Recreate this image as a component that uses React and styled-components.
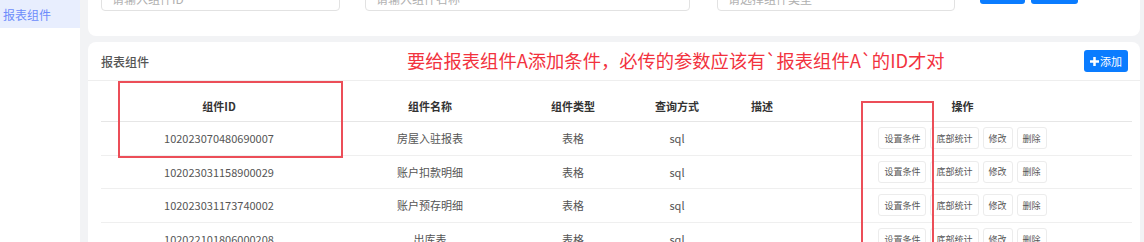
import React from 'react';
import styled, { createGlobalStyle } from 'styled-components';

const GlobalStyle = createGlobalStyle`
  html, body {
    margin: 0;
    padding: 0;
    background: #f2f3f5;
    font-family: "Noto Sans CJK SC", "Liberation Sans", sans-serif;
    overflow: hidden;
  }
  * { box-sizing: border-box; }
`;

const rows = [
  { id: '102023070480690007', name: '房屋入驻报表', type: '表格', query: 'sql' },
  { id: '102023031158900029', name: '账户扣款明细', type: '表格', query: 'sql' },
  { id: '102023031173740002', name: '账户预存明细', type: '表格', query: 'sql' },
  { id: '102022101806000208', name: '出库表', type: '表格', query: 'sql' },
];

const Layout = styled.div`
  display: flex;
  width: 1144px;
  height: 242px;
  overflow: hidden;
`;

const Sidebar = styled.aside`
  width: 80px;
  flex: none;
  background: #fff;
`;

const MenuItem = styled.div`
  height: 28px;
  padding-left: 3px;
  display: flex;
  align-items: center;
  font-size: 12px;
  color: ${p => (p.active ? '#6d8cfb' : '#555')};
  background: ${p => (p.active ? '#e8eefe' : 'transparent')};
`;

const Main = styled.main`
  flex: 1;
  padding: 0 4px 0 8px;
  margin-top: -31px;
  display: flex;
  flex-direction: column;
  gap: 6px;
`;

const Card = styled.section`
  position: relative;
  background: #fff;
  border-radius: 8px;
`;

const SearchRow = styled.div`
  display: flex;
  align-items: flex-start;
  padding: 16px 13px 25px;
`;

const Field = styled.div`
  position: relative;
  width: ${p => p.w}px;
  margin-right: ${p => p.mr}px;
  height: 26px;
  border: 1px solid #e2e2e2;
  border-radius: 4px;
  font-size: 12px;
  color: #b0b0b0;
  display: flex;
  align-items: center;
  padding: 0 10px;
`;

const Caret = styled.svg`
  position: absolute;
  right: 10px;
  top: 9px;
`;

const BlueButton = styled.button`
  height: 26px;
  width: ${p => p.w}px;
  margin-top: -7px;
  margin-left: ${p => p.ml}px;
  border: none;
  border-radius: 3px;
  background: #0a7cff;
  color: #fff;
  font-family: inherit;
  font-size: 12px;
  padding: 0;
`;

const CardHeader = styled.div`
  height: 39px;
  display: flex;
  align-items: center;
  padding: 0 12px 0 13px;
  border-bottom: 1px solid #eeeeee;
`;

const Title = styled.div`
  font-size: 12px;
  color: #555;
  font-weight: 500;
  width: 306px;
`;

const Note = styled.div`
  flex: 1;
  font-size: 18.3px;
  margin-top: -2px;
  color: #f2323e;
  white-space: nowrap;
`;

const AddButton = styled.button`
  width: 44px;
  height: 22px;
  border: none;
  border-radius: 3px;
  background: #0a7cff;
  color: #fff;
  font-family: inherit;
  font-size: 11px;
  padding: 0;
  display: flex;
  align-items: center;
  justify-content: center;
  gap: 1px;
`;

const TableWrap = styled.div`
  padding: 10px 8px 0 13px;
`;

const Row = styled.div`
  display: grid;
  grid-template-columns: 236px 186px 100px 108px 62px 1fr;
  align-items: center;
  height: ${p => (p.head ? 31 : 33.6)}px;
  border-bottom: 1px solid ${p => (p.head ? '#e6e6e6' : '#efefef')};
`;

const Cell = styled.div`
  text-align: center;
  font-size: 11px;
  color: ${p => (p.head ? '#333' : '#555')};
  font-weight: ${p => (p.head ? 700 : 400)};
`;

const Ops = styled.div`
  display: flex;
  justify-content: center;
  gap: 4px;
`;

const OpButton = styled.button`
  height: 22px;
  padding: 0 5px;
  border: 1px solid #ececec;
  border-radius: 3px;
  background: #fff;
  color: #555;
  font-family: inherit;
  font-size: 9px;
`;

const Mark = styled.div`
  position: absolute;
  left: ${p => p.x}px;
  top: ${p => p.y}px;
  width: ${p => p.w}px;
  height: ${p => p.h}px;
  border: 2px solid #ec4e58;
  pointer-events: none;
`;

const Plus = () => (
  <svg width="9" height="9" viewBox="0 0 10 10">
    <path d="M3.6 0h2.8v3.6H10v2.8H6.4V10H3.6V6.4H0V3.6h3.6z" fill="#fff" />
  </svg>
);

export default function App() {
  return (
    <>
      <GlobalStyle />
      <Layout>
        <Sidebar>
          <MenuItem active>报表组件</MenuItem>
        </Sidebar>
        <Main>
          <Card>
            <SearchRow>
              <Field w={239} mr={25}>请输入组件ID</Field>
              <Field w={325} mr={27}>请输入组件名称</Field>
              <Field w={238} mr={0}>
                请选择组件类型
                <Caret width="8" height="5" viewBox="0 0 8 5">
                  <path d="M1 1l3 3 3-3" stroke="#aaa" fill="none" strokeWidth="1" />
                </Caret>
              </Field>
              <BlueButton w={45} ml={25}>查询</BlueButton>
              <BlueButton w={47} ml={6}>重置</BlueButton>
            </SearchRow>
          </Card>
          <Card>
            <CardHeader>
              <Title>报表组件</Title>
              <Note>要给报表组件A添加条件，必传的参数应该有`报表组件A`的ID才对</Note>
              <AddButton>
                <Plus />
                添加
              </AddButton>
            </CardHeader>
            <TableWrap>
              <Row head>
                <Cell head>组件ID</Cell>
                <Cell head>组件名称</Cell>
                <Cell head>组件类型</Cell>
                <Cell head>查询方式</Cell>
                <Cell head>描述</Cell>
                <Cell head>操作</Cell>
              </Row>
              {rows.map(r => (
                <Row key={r.id}>
                  <Cell>{r.id}</Cell>
                  <Cell>{r.name}</Cell>
                  <Cell>{r.type}</Cell>
                  <Cell>{r.query}</Cell>
                  <Cell />
                  <Ops>
                    <OpButton>设置条件</OpButton>
                    <OpButton>底部统计</OpButton>
                    <OpButton>修改</OpButton>
                    <OpButton>删除</OpButton>
                  </Ops>
                </Row>
              ))}
            </TableWrap>
            <Mark x={30} y={39} w={225} h={77} />
            <Mark x={773} y={59} w={73} h={170} />
          </Card>
        </Main>
      </Layout>
    </>
  );
}
